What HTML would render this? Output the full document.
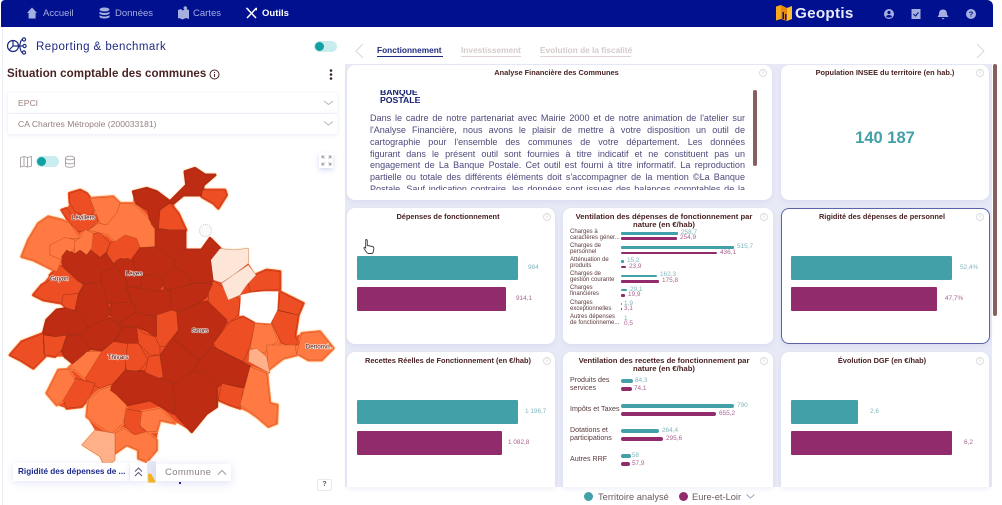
<!DOCTYPE html>
<html lang="fr"><head><meta charset="utf-8"><title>Geoptis</title>
<style>
*{box-sizing:border-box}
html{background:#fff}
html,body{margin:0;padding:0;width:1002px;height:505px;overflow:hidden;font-family:"Liberation Sans",sans-serif}
#w{position:absolute;left:0;top:0;width:1002px;height:505px;overflow:hidden;background:#fff;filter:blur(.3px)}
.a{position:absolute;white-space:nowrap}
#nav{left:1px;top:0;width:992px;height:27px;background:#00108f;border-radius:4px 6px 0 0}
.n{top:7px;font-size:9.500px;line-height:13px;color:#a5afdf}
.card{position:absolute;background:#fff;border-radius:8px;box-shadow:0 2px 5px rgba(120,130,200,.12)}
.t{position:absolute;font-size:7.400px;line-height:8px;font-weight:bold;color:#4a2224;text-align:center;white-space:nowrap}
.tv{font-size:7.700px}
.i{position:absolute;width:8px;height:8px;border:1px solid #ddd;border-radius:50%;color:#ccc;font-size:6px;line-height:6px;text-align:center}
.b{position:absolute;border-radius:1px}
.te{background:#41a0a8}.pu{background:#922b6c}
.v{position:absolute;font-size:6.400px;line-height:8px;white-space:nowrap}
.vt{color:#7fb6bd}.vp{color:#a8628f}
.l{position:absolute;left:570px;font-size:6px;line-height:5.800px;color:#5a3a3c;white-space:nowrap}
.l2{position:absolute;left:570px;font-size:7.100px;line-height:7.700px;color:#5a3a3c;white-space:nowrap}
.ln{display:block;text-align:justify;text-align-last:justify;height:11.850px;line-height:11.850px}
.sel{position:absolute;left:8px;width:329px;height:20px;background:#fff;box-shadow:0 1px 5px rgba(120,130,200,.16);font-size:8.600px;line-height:20px;color:#977f7f;padding-left:10px;border-radius:2px}
</style></head><body><div id="w">
<div class="a" style="left:345px;top:64px;width:647px;height:423px;background:#e7e9f6"></div>
<div class="a" style="left:2px;top:27px;width:1px;height:478px;background:#eceef5"></div>
<div class="a" id="nav"></div>

<!-- nav icons -->
<svg class="a" style="left:0;top:0" width="300" height="27" fill="#a5afdf">
<path d="M32 7.500 27 13h1.600v5.500h7V13H37z"/>
<ellipse cx="104.500" cy="9.500" rx="5" ry="2"/><path d="M99.500 11.500c1 2 9 2 10 0v2c-1 2-9 2-10 0zM99.500 15c1 2 9 2 10 0v2c-1 2-9 2-10 0z"/>
<path d="M178 10l3-1 1.500 1.500L186 9l3 1v9l-3-1-3.500 1.500L179 18l-1 .5zM183.500 8a1.800 1.800 0 1 1 0 .1z"/>
<path d="M246.500 8 256 18M256.500 8 247 18" stroke="#fff" stroke-width="1.500" fill="none"/>
<path d="M246 7.500 249 9l-1 1.500zM254 9.500l3-2v3z" fill="#fff"/>
</svg>
<div class="a n" style="left:43px">Accueil</div>
<div class="a n" style="left:115px">Données</div>
<div class="a n" style="left:193px">Cartes</div>
<div class="a n" style="left:262px;color:#fff;font-weight:bold">Outils</div>

<!-- logo -->
<svg class="a" style="left:775px;top:4px" width="18" height="18">
<path d="M1 2.500 6 1v14l-5 1.500z" fill="#f7a81b"/><path d="M6 1l6 3v13l-6-2z" fill="#e8890f"/><path d="M12 4l5-2v13l-5 2z" fill="#fbbd2d"/>
<path d="M7.500 8h1.500v7H7.500zM10 10h1.500v6H10z" fill="#00108f"/>
</svg>
<div class="a" style="left:795px;top:4px;font-size:15.200px;line-height:19px;color:#e8ecfa;font-weight:bold;letter-spacing:.3px">Geoptis</div>
<svg class="a" style="left:880px;top:5px" width="100" height="18">
<circle cx="9" cy="9" r="5" fill="#a5afdf"/><circle cx="9" cy="7.500" r="1.600" fill="#00108f"/><path d="M6 11.500c1-2 5-2 6 0-1 1.500-5 1.500-6 0z" fill="#00108f"/>
<rect x="31.500" y="4" width="9" height="10" fill="#a5afdf"/><path d="M33.500 9l2 2 3-3.500" stroke="#00108f" stroke-width="1.100" fill="none"/>
<path d="M63 4.500c3 0 4 2 4 5l1.500 2.500h-11L59 9.500c0-3 1-5 4-5zM61.500 13h3l-1.500 1.500z" fill="#a5afdf"/>
<circle cx="91" cy="9" r="5" fill="#a5afdf"/><text x="91" y="11.500" font-size="7.500" font-weight="bold" fill="#00108f" text-anchor="middle" font-family="Liberation Sans, sans-serif">?</text>
</svg>

<!-- left header -->
<svg class="a" style="left:6px;top:36px" width="22" height="21" fill="none" stroke="#1d2a80" stroke-width="1.200">
<circle cx="7" cy="10" r="5.500"/><path d="M7 10V5M7 10h5M7 10 3.500 13.500"/>
<circle cx="18" cy="3.500" r="1.600"/><circle cx="18.500" cy="10" r="1.600"/><circle cx="18" cy="16.500" r="1.600"/>
<path d="M12.500 10h4.500M16.400 3.500C14 3.500 14.500 10 13 10 14.500 10 14 16.500 16.400 16.500"/>
</svg>
<div class="a" style="left:36px;top:40px;font-size:11.500px;line-height:15px;color:#1d2a80;font-weight:500;letter-spacing:.45px">Reporting &amp; benchmark</div>
<div class="a" style="left:314px;top:41px;width:23px;height:11px;border-radius:6px;background:#c9ecef"></div>
<div class="a" style="left:315px;top:42px;width:9px;height:9px;border-radius:50%;background:#13a0a2"></div>
<div class="a" style="left:7px;top:67px;font-size:11.500px;line-height:15px;font-weight:bold;color:#4a2224;letter-spacing:.08px">Situation comptable des communes</div>
<svg class="a" style="left:208px;top:68px" width="13" height="13"><circle cx="6.500" cy="6.500" r="4.500" fill="none" stroke="#4a2224"/><path d="M6.500 6v3M6.500 4v1" stroke="#4a2224"/></svg>
<svg class="a" style="left:328px;top:68px" width="6" height="13" fill="#3a2224"><circle cx="3" cy="2.500" r="1.300"/><circle cx="3" cy="6.500" r="1.300"/><circle cx="3" cy="10.500" r="1.300"/></svg>
<div class="sel" style="top:93px">EPCI</div>
<div class="sel" style="top:114px">CA Chartres Métropole (200033181)</div>
<svg class="a" style="left:323px;top:99px" width="11" height="30" fill="none" stroke="#b9b5bb"><path d="M1 2l4.500 3.500L10 2M1 22.500 5.500 26 10 22.500"/></svg>

<svg class="a" style="left:19px;top:155px" width="14" height="13" fill="none" stroke="#a8a0a0" stroke-width=".9"><path d="M1.500 2.500 5 1.500l3.500 1 4-1v9.500l-4 1-3.500-1-3.500 1zM5 1.500v9.500M8.500 2.500V12"/></svg>
<div class="a" style="left:36px;top:156px;width:23px;height:11px;border-radius:6px;background:#c9ecef"></div>
<div class="a" style="left:37px;top:157px;width:9px;height:9px;border-radius:50%;background:#13a0a2"></div>
<svg class="a" style="left:64px;top:155px" width="12" height="13" fill="none" stroke="#a8a0a0" stroke-width=".9"><ellipse cx="6" cy="3" rx="4.500" ry="1.800"/><path d="M1.500 3v7.500c0 2.400 9 2.400 9 0V3M1.500 7c0 2.400 9 2.400 9 0"/></svg>
<div class="a" style="left:319px;top:153px;width:14px;height:15px;background:#fff;box-shadow:0 2px 5px rgba(120,130,220,.3)"></div>
<svg class="a" style="left:321px;top:155px" width="11" height="11" fill="none" stroke="#8c8c95" stroke-width=".8"><path d="M1 3.500V1h2.500M1 1l2.500 2.500M10 3.500V1H7.500M10 1 7.500 3.500M1 7.500V10h2.500M1 10l2.500-2.500M10 7.500V10H7.500M10 10 7.500 7.500"/></svg>

<!-- map -->
<svg class="a" style="left:0;top:160px;filter:drop-shadow(0 0 1px #ffcf85)" width="345" height="345" viewBox="0 0 1035 1035">
<defs>
<g id="mr">
<path d="M605 90 675 90 680 105 655 145 640 130 605 110z"/>
<path d="M475 205 480 150 510 130 535 160 558 210 510 210z"/>
<path d="M208 100 240 90 260 100 290 140 270 170 250 165 225 155 210 130z"/>
<path d="M185 150 200 145 215 165 290 165 295 185 265 210 235 215 210 190z"/>
<path d="M280 220 300 218 330 250 320 275 300 292 272 270z"/>
<path d="M330 250 375 225 410 235 420 262 400 290 390 300 360 295 340 310 320 280z"/>
<path d="M180 315 215 345 250 375 235 400 190 410 185 430 130 420 100 405 125 375 150 360 150 345z"/>
<path d="M190 405 235 400 225 450 205 450 185 430z"/>
<path d="M30 585 65 545 130 520 130 575 135 590 100 625 60 600z"/>
<path d="M130 525 165 530 200 525 185 570 165 590 135 585z"/>
<path d="M470 460 490 445 530 450 535 510 495 560 470 560 465 530z"/>
<path d="M410 500 430 520 465 530 480 560 480 585 450 585 430 565 415 550z"/>
<path d="M625 395 640 360 720 420 715 465 685 490 625 425z"/>
<path d="M640 550 690 485 730 470 765 490 750 560 730 605 650 565z"/>
<path d="M665 670 730 685 720 745 690 735 655 720z"/>
<path d="M840 395 910 430 895 465 835 450z"/>
<path d="M825 450 895 465 885 530 900 550 880 560 845 550 815 490z"/>
<path d="M745 370 765 345 800 330 840 335 840 390 790 390 750 395z"/>
<path d="M255 655 305 575 340 545 385 545 375 630 340 670 300 685 270 670z"/>
<path d="M385 545 415 550 445 600 420 630 380 640 375 600z"/>
<path d="M445 590 480 585 490 650 465 660 435 640z"/>
<path d="M190 720 225 655 285 670 270 710 245 740 200 745z"/>
<path d="M370 745 425 755 420 800 440 815 405 825 375 800z"/>
</g>
<g id="mo">
<path d="M270 115 340 110 360 130 350 160 320 195 300 190 290 165z"/>
<path d="M350 160 360 130 400 130 445 175 465 210 465 260 420 262 410 235 375 225 345 245 325 225 285 215 265 210 295 190 320 195z"/>
<path d="M145 170 185 180 210 190 238 235 195 235 150 255 150 285 185 300 170 335 140 320 100 300 65 290 85 240 115 190z"/>
<path d="M150 255 195 232 225 240 222 270 190 285 185 300 150 285z"/>
<path d="M238 235 255 208 280 220 275 265 260 285 240 270 225 280 222 245z"/>
<path d="M765 490 815 495 835 545 805 560 795 580 750 565z"/>
<path d="M800 555 885 555 890 585 850 595 805 630z"/>
<path d="M750 620 800 640 810 730 832 735 830 790 805 800 770 770 720 735 740 660z"/>
<path d="M905 520 960 515 1000 565 965 600 925 600 890 580z"/>
<path d="M205 625 255 575 305 575 255 655 225 630z"/>
<path d="M140 700 175 630 205 628 225 660 190 720 170 735z"/>
<path d="M260 770 265 720 300 690 330 680 350 705 380 735 370 790 335 820 300 800z"/>
<path d="M425 755 480 745 525 790 480 780 470 815 440 815 420 795z"/>
<path d="M345 820 370 805 405 825 440 815 470 840 470 870 440 905 415 895 415 870 380 855 345 880z"/>
</g>
<g id="md">
<path d="M400 95 440 85 470 95 510 125 480 150 475 205 455 195 445 150 410 130z"/>
<path d="M510 125 560 75 555 35 585 25 615 45 645 45 610 75 605 105 550 105 520 130z"/>
<path d="M185 290 200 270 225 285 240 270 260 285 272 270 300 295 320 280 345 320 305 335 305 365 260 370 235 365 215 345 190 315z"/>
<path d="M250 375 300 365 320 395 320 430 330 460 300 485 265 500 230 460 228 430z"/>
<path d="M305 335 345 320 375 345 380 395 395 425 335 430 320 425 305 365z"/>
<path d="M345 320 350 300 385 295 400 310 425 350 425 380 385 380 375 350z"/>
<path d="M400 290 420 265 465 260 490 275 525 295 525 320 490 350 450 345 425 350 400 310z"/>
<path d="M425 350 450 345 470 340 490 370 470 395 430 400 425 380z"/>
<path d="M490 350 525 320 555 340 578 368 520 390 495 385z"/>
<path d="M465 210 555 210 555 270 525 300 490 275 465 260z"/>
<path d="M555 270 605 270 630 235 660 265 632 300 640 365 580 370 555 340 525 318 525 298z"/>
<path d="M510 390 580 370 638 372 622 405 595 430 530 455 515 450z"/>
<path d="M380 380 425 385 470 395 510 390 515 450 470 465 435 465 395 425z"/>
<path d="M335 430 395 425 410 455 355 490 330 460z"/>
<path d="M410 455 435 465 470 470 470 530 440 510 410 500 390 500 350 495z"/>
<path d="M140 480 170 450 205 445 230 455 265 500 240 520 205 525 165 530 130 520z"/>
<path d="M265 500 300 485 330 475 365 505 340 545 305 570 265 565 240 530z"/>
<path d="M365 505 410 500 415 550 375 550 345 545z"/>
<path d="M205 525 240 525 270 565 250 585 220 610 195 590 185 570z"/>
<path d="M530 460 600 430 625 425 682 480 640 550 600 600 520 535 535 510z"/>
<path d="M520 535 595 605 570 640 520 670 490 650 480 590z"/>
<path d="M595 605 635 560 750 620 730 680 665 670 650 680 610 640 585 635z"/>
<path d="M330 690 375 630 430 635 490 660 520 670 530 720 520 760 450 720 380 735 350 705z"/>
<path d="M520 670 570 640 585 635 610 640 650 680 650 740 620 760 575 815 525 760z"/>
</g>
</defs>
<path fill="#ee4e24" d="M555 35 585 25 615 45 645 45 610 75 605 90 675 90 680 105 655 145 640 130 605 110 550 105 520 130 535 160 558 210 555 270 605 270 630 235 660 265 700 270 745 265 745 310 768 345 800 330 840 335 840 395 910 430 895 465 885 530 905 520 960 515 1000 565 965 600 925 600 890 585 850 595 805 630 810 730 832 735 830 790 805 800 770 770 720 745 690 735 655 720 650 740 620 760 575 815 525 785 480 780 470 840 470 870 440 905 415 895 415 870 380 855 345 880 345 900 315 925 300 890 245 855 285 810 260 770 265 720 245 740 200 745 170 735 140 700 175 630 205 625 220 610 195 590 165 590 135 590 100 625 60 600 30 585 65 545 130 520 140 480 170 450 205 445 185 430 130 420 100 405 125 375 150 345 170 335 140 320 100 300 65 290 85 240 115 190 145 170 185 180 210 190 185 150 200 145 210 130 208 100 240 90 260 100 270 115 340 110 360 130 400 130 400 95 440 85 470 95 510 125 560 75z"/>
<g stroke-width="9" stroke-linejoin="round">
<g fill="#ee4e24" stroke="#ee4e24"><use href="#mr"/></g>
<g fill="#ff7a42" stroke="#ff7a42"><use href="#mo"/></g>
<g fill="#bf2c14" stroke="#bf2c14"><use href="#md"/></g>
</g>
<g stroke-linejoin="round" stroke-width="1.500" stroke="#9a2f12">
<g fill="#ee4e24"><use href="#mr"/></g>
<g fill="#ff7a42" stroke="#c9501f"><use href="#mo"/></g>
<g fill="#ffb088" stroke="#c9602f">
<path d="M748 570 770 565 800 590 810 640 745 605z"/>
<path d="M245 855 285 810 345 820 345 900 315 925 300 890z"/>
</g>
<g fill="#fde6d8" stroke="#c99070">
<path d="M632 300 655 265 700 270 745 265 745 310 700 345 665 368 640 360z"/>
<path d="M665 370 700 345 745 315 768 345 740 375 720 405 685 420z"/>
</g>
<g fill="#bf2c14"><use href="#md"/></g>
</g>
<path fill="#fff" d="M722 405 752 398 790 394 835 394 832 450 812 490 768 487 730 466 718 468 722 420z"/>
<g font-family="Liberation Sans, sans-serif" font-size="19" fill="#3a1a1a" text-anchor="middle" stroke="#fff" stroke-width="4" paint-order="stroke" stroke-opacity=".75">
<text x="250" y="179">Lèvillers</text><text x="178" y="362">Guyon</text><text x="402" y="347">Lèves</text><text x="600" y="517">Sours</text><text x="354" y="597">Thivars</text><text x="957" y="566">Denonvi..</text>
</g>
</svg>
<div class="a" style="left:199px;top:224px;width:13px;height:13px;border-radius:50%;background:#fafafa;border:1px dotted #ccc"></div>

<!-- map bottom -->
<div class="a" style="left:13px;top:463px;width:116px;height:18px;background:#fff;box-shadow:0 2px 8px rgba(120,130,220,.2);font-size:8.200px;line-height:18px;font-weight:bold;color:#1d2a8c;padding-left:5px">Rigidité des dépenses de ...</div>
<div class="a" style="left:130px;top:463px;width:17px;height:18px;background:#fff;box-shadow:0 2px 8px rgba(120,130,220,.2)"></div>
<svg class="a" style="left:133px;top:466px" width="11" height="12" fill="none" stroke="#555a80"><path d="M2 5.500 5.500 2 9 5.500M2 10 5.500 6.500 9 10"/></svg>
<div class="a" style="left:147px;top:461px;width:9px;height:22px;background:#e6e8f5"></div>
<svg class="a" style="left:147px;top:472px" width="10" height="12"><path d="M1 2 4 1.500 8 9 8 10.500 1.500 10.500z" fill="#f7b417"/></svg>
<div class="a" style="left:156px;top:464px;width:75px;height:17px;background:#fff;box-shadow:0 2px 10px rgba(120,130,220,.25);font-size:9.500px;line-height:17px;color:#8a8088;padding-left:9px;letter-spacing:.35px">Commune</div>
<svg class="a" style="left:216px;top:468px" width="12" height="9" fill="none" stroke="#9a9aa5"><path d="M2 6.500 6 2.500l4 4"/></svg>
<div class="a" style="left:179px;top:482px;width:2px;height:2px;background:#1d2a8c"></div>
<div class="a" style="left:317px;top:479px;width:15px;height:12px;background:#fff;border:1px solid #e8e8ee;border-radius:2px;font-size:7px;line-height:10px;text-align:center;font-weight:bold;color:#555">?</div>

<!-- tabs -->
<svg class="a" style="left:354px;top:42px" width="12" height="18" fill="none" stroke="#d8d8dc"><path d="M9 2 2 9l7 7"/></svg>
<svg class="a" style="left:974px;top:42px" width="12" height="18" fill="none" stroke="#d8d8dc"><path d="M3 2l7 7-7 7"/></svg>
<div class="a" style="left:377px;top:46px;font-size:8.300px;line-height:9px;font-weight:bold;color:#1d2a80">Fonctionnement</div>
<div class="a" style="left:377px;top:56px;width:66px;height:1.200px;background:#1d2a80"></div>
<div class="a" style="left:461px;top:46px;font-size:8.300px;line-height:9px;font-weight:bold;color:#d6cbcb">Investissement</div>
<div class="a" style="left:461px;top:56px;width:60px;height:1px;background:#e0d4d4"></div>
<div class="a" style="left:540px;top:46px;font-size:8.300px;line-height:9px;font-weight:bold;color:#d6cbcb">Evolution de la fiscalité</div>
<div class="a" style="left:540px;top:56px;width:91px;height:1px;background:#e0d4d4"></div>

<!-- card 1 -->
<div class="card" style="left:347px;top:65px;width:425px;height:135px"></div>
<div class="t" style="left:347px;top:69px;width:425px;padding-right:6px">Analyse Financière des Communes</div>
<div class="i" style="left:759px;top:69px">i</div>
<div class="a" style="left:380px;top:90px;width:60px;height:14px;overflow:hidden"><div style="font-size:8.700px;line-height:7.500px;margin-top:-1px;font-weight:bold;color:#16206e">BANQUE<br>POSTALE</div></div>
<div class="a" style="left:370px;top:113px;width:375px;height:76.500px;overflow:hidden;font-size:9.050px;color:#4c4a7c;white-space:normal">
<span class="ln">Dans le cadre de notre partenariat avec Mairie 2000 et de notre animation de l'atelier sur</span>
<span class="ln">l'Analyse Financière, nous avons le plaisir de mettre à votre disposition un outil de</span>
<span class="ln">cartographie pour l'ensemble des communes de votre département. Les données</span>
<span class="ln">figurant dans le présent outil sont fournies à titre indicatif et ne constituent pas un</span>
<span class="ln">engagement de La Banque Postale. Cet outil est fourni à titre informatif. La reproduction</span>
<span class="ln">partielle ou totale des différents éléments doit s'accompagner de la mention ©La Banque</span>
<span class="ln">Postale. Sauf indication contraire, les données sont issues des balances comptables de la</span>
</div>
<div class="a" style="left:753px;top:90px;width:4px;height:76px;background:#85605e;border-radius:2px"></div>

<!-- card 2 -->
<div class="card" style="left:781px;top:65px;width:208px;height:135px"></div>
<div class="t" style="left:781px;top:69px;width:208px">Population INSEE du territoire (en hab.)</div>
<div class="i" style="left:976px;top:69px">i</div>
<div class="a" style="left:781px;top:128px;width:208px;text-align:center;font-size:16.500px;line-height:20px;font-weight:bold;color:#41a0a8">140 187</div>
<div class="a" style="left:993px;top:64px;width:4px;height:252px;background:#85605e;border-radius:2px"></div>

<!-- row 2 -->
<div class="card" style="left:347px;top:208px;width:208px;height:136px"></div>
<div class="t" style="left:347px;top:213px;width:202px">Dépenses de fonctionnement</div>
<div class="i" style="left:543px;top:213px">i</div>
<div class="b te" style="left:357px;top:256px;width:161px;height:24px"></div>
<div class="b pu" style="left:357px;top:287px;width:149px;height:24px"></div>
<div class="v vt" style="left:528px;top:264px">984</div>
<div class="v vp" style="left:516px;top:295px">914,1</div>
<svg class="a" style="left:362px;top:238px" width="14" height="17" fill="#fff" stroke="#3a3a3a" stroke-width=".9"><path d="M4 1.500c1 0 1.300.8 1.300 1.500v4.500l5 1c1.500.3 1.700 1.200 1.500 2.500l-.6 3c-.2 1-.8 1.500-1.800 1.500H6.500c-.8 0-1.300-.4-1.800-1L2 10.500c-.5-.8.500-1.800 1.500-1l.2.300V3c0-.8 0-1.500.3-1.500z"/></svg>

<div class="card" style="left:563px;top:208px;width:210px;height:136px"></div>
<div class="t tv" style="left:563px;top:213px;width:202px">Ventilation des dépenses de fonctionnement par<br>nature (en €/hab)</div>
<div class="i" style="left:760px;top:213px">i</div>
<div class="l" style="top:230px">Charges à<br>caractères géner...</div>
<div class="l" style="top:244px">Charges de<br>personnel</div>
<div class="l" style="top:258px">Atténuation de<br>produits</div>
<div class="l" style="top:272px">Charges de<br>gestion courante</div>
<div class="l" style="top:286px">Charges<br>financières</div>
<div class="l" style="top:301px">Charges<br>exceptionnelles</div>
<div class="l" style="top:315px">Autres dépenses<br>de fonctionneme...</div>
<div class="b te" style="left:621px;top:232px;width:57px;height:2.500px"></div><div class="b pu" style="left:621px;top:237px;width:56px;height:2.500px"></div>
<div class="b te" style="left:621px;top:246px;width:113px;height:2.500px"></div><div class="b pu" style="left:621px;top:251.500px;width:96px;height:2.500px"></div>
<div class="b te" style="left:621px;top:260px;width:2.500px;height:2.500px"></div><div class="b pu" style="left:621px;top:265.500px;width:5px;height:2.500px"></div>
<div class="b te" style="left:621px;top:274.500px;width:36px;height:2.500px"></div><div class="b pu" style="left:621px;top:280px;width:38px;height:2.500px"></div>
<div class="b te" style="left:621px;top:288.500px;width:6px;height:2.500px"></div><div class="b pu" style="left:621px;top:294px;width:4px;height:2.500px"></div>
<div class="b te" style="left:621px;top:303px;width:1px;height:2px"></div><div class="b pu" style="left:621px;top:308px;width:1px;height:2px"></div>
<div class="v vt" style="left:681px;top:229px">258,7</div><div class="v vp" style="left:680px;top:234px">254,9</div>
<div class="v vt" style="left:737px;top:243px">515,7</div><div class="v vp" style="left:720px;top:248.500px">436,1</div>
<div class="v vt" style="left:627px;top:257px">15,2</div><div class="v vp" style="left:629px;top:262.500px">23,9</div>
<div class="v vt" style="left:660px;top:271px">162,3</div><div class="v vp" style="left:662px;top:276.500px">175,8</div>
<div class="v vt" style="left:630px;top:285.500px">29,1</div><div class="v vp" style="left:628px;top:291px">19,9</div>
<div class="v vt" style="left:624px;top:300px">1,9</div><div class="v vp" style="left:624px;top:305px">3,1</div>
<div class="v vt" style="left:624px;top:314.500px">1</div><div class="v vp" style="left:624px;top:319.500px">0,5</div>

<div class="card" style="left:780.500px;top:208px;width:209px;height:136px;border:1px solid #5b64a8"></div>
<div class="t" style="left:781px;top:213px;width:202px">Rigidité des dépenses de personnel</div>
<div class="i" style="left:976px;top:213px">i</div>
<div class="b te" style="left:791px;top:256px;width:161px;height:24px"></div>
<div class="b pu" style="left:791px;top:287px;width:146px;height:24px"></div>
<div class="v vt" style="left:960px;top:264px">52,4%</div>
<div class="v vp" style="left:945px;top:295px">47,7%</div>

<!-- row 3 -->
<div class="card" style="left:347px;top:352px;width:208px;height:135px;border-radius:8px 8px 0 0"></div>
<div class="t" style="left:347px;top:357px;width:202px">Recettes Réelles de Fonctionnement (en €/hab)</div>
<div class="i" style="left:543px;top:357px">i</div>
<div class="b te" style="left:357px;top:400px;width:161px;height:24px"></div>
<div class="b pu" style="left:357px;top:431px;width:145px;height:24px"></div>
<div class="v vt" style="left:525px;top:408px">1 196,7</div>
<div class="v vp" style="left:508px;top:439px">1 082,8</div>

<div class="card" style="left:563px;top:352px;width:210px;height:135px;border-radius:8px 8px 0 0"></div>
<div class="t tv" style="left:563px;top:357px;width:202px">Ventilation des recettes de fonctionnement par<br>nature (en €/hab)</div>
<div class="i" style="left:760px;top:357px">i</div>
<div class="l2" style="top:377px">Produits des<br>services</div>
<div class="l2" style="top:406px">Impôts et Taxes</div>
<div class="l2" style="top:427px">Dotations et<br>participations</div>
<div class="l2" style="top:456px">Autres RRF</div>
<div class="b te" style="left:621px;top:379px;width:12px;height:4px;border-radius:2px"></div><div class="b pu" style="left:621px;top:387px;width:11px;height:4px;border-radius:2px"></div>
<div class="b te" style="left:621px;top:404px;width:113px;height:4px;border-radius:2px"></div><div class="b pu" style="left:621px;top:411.500px;width:95px;height:4px;border-radius:2px"></div>
<div class="b te" style="left:621px;top:429px;width:38px;height:4px;border-radius:2px"></div><div class="b pu" style="left:621px;top:436.500px;width:42px;height:4px;border-radius:2px"></div>
<div class="b te" style="left:621px;top:454px;width:9.500px;height:4px;border-radius:2px"></div><div class="b pu" style="left:621px;top:461.500px;width:9px;height:4px;border-radius:2px"></div>
<div class="v vt" style="left:635px;top:377px">84,3</div><div class="v vp" style="left:634px;top:385px">74,1</div>
<div class="v vt" style="left:737px;top:402px">790</div><div class="v vp" style="left:719px;top:409.500px">655,2</div>
<div class="v vt" style="left:662px;top:427px">264,4</div><div class="v vp" style="left:666px;top:434.500px">295,6</div>
<div class="v vt" style="left:632px;top:452px">58</div><div class="v vp" style="left:632px;top:459.500px">57,9</div>

<div class="card" style="left:781px;top:352px;width:208px;height:135px;border-radius:8px 8px 0 0"></div>
<div class="t" style="left:781px;top:357px;width:202px">Évolution DGF (en €/hab)</div>
<div class="i" style="left:976px;top:357px">i</div>
<div class="b te" style="left:791px;top:400px;width:67px;height:24px"></div>
<div class="b pu" style="left:791px;top:431px;width:161px;height:24px"></div>
<div class="v vt" style="left:870px;top:408px">2,6</div>
<div class="v vp" style="left:964px;top:439px">6,2</div>

<!-- legend -->
<div class="a" style="left:584px;top:492px;width:9px;height:9px;border-radius:50%;background:#41a0a8"></div>
<div class="a" style="left:598px;top:491px;font-size:9.300px;line-height:12px;color:#6a5a60">Territoire analysé</div>
<div class="a" style="left:679px;top:492px;width:9px;height:9px;border-radius:50%;background:#922b6c"></div>
<div class="a" style="left:692px;top:491px;font-size:9.300px;line-height:12px;color:#6a5a60">Eure-et-Loir</div>
<svg class="a" style="left:745px;top:493px" width="11" height="7" fill="none" stroke="#a0a0c0"><path d="M1.500 1.500 5.500 5l4-3.500"/></svg>
</div></body></html>
